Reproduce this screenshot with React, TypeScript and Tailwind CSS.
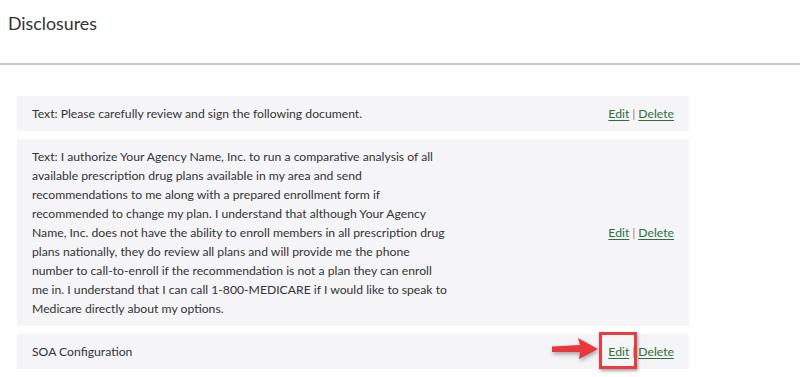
import React from 'react';

const rows = [
  { id: 1, lines: ['Text: Please carefully review and sign the following document.'] },
  {
    id: 2,
    lines: [
      'Text: I authorize Your Agency Name, Inc. to run a comparative analysis of all',
      'available prescription drug plans available in my area and send',
      'recommendations to me along with a prepared enrollment form if',
      'recommended to change my plan. I understand that although Your Agency',
      'Name, Inc. does not have the ability to enroll members in all prescription drug',
      'plans nationally, they do review all plans and will provide me the phone',
      'number to call-to-enroll if the recommendation is not a plan they can enroll',
      'me in. I understand that I can call 1-800-MEDICARE if I would like to speak to',
      'Medicare directly about my options.',
    ],
  },
  { id: 3, lines: ['SOA Configuration'], highlight: true },
];

export default function App() {
  return (
    <div className="min-h-screen bg-white text-[#333333] font-['Lato','Noto_Sans',sans-serif]">
      <header className="h-[65px] border-b-2 border-[#c9cacd] px-2 pt-[11px]">
        <h1 className="text-[17.8px] leading-[24px]">Disclosures</h1>
      </header>

      <div className="ml-[17px] mt-[31px] flex w-[672px] flex-col gap-[8px]">
        {rows.map((r) => (
          <div key={r.id} className="flex items-center justify-between bg-[#f5f5f7] px-[15px] py-[8px] text-[12.2px] leading-[19px]">
            <p className="w-[440px]">
              {r.lines.map((l, i) => (
                <span key={i} className="block whitespace-nowrap">{l}</span>
              ))}
            </p>
            <div className="relative flex items-center gap-[3px] text-[#2f6e3b]">
              <a href="#" className="underline underline-offset-2">Edit</a>
              <span className="text-[#888888]">|</span>
              <a href="#" className="underline underline-offset-2">Delete</a>
              {r.highlight && (
                <>
                  <span className="absolute left-[-9px] top-[-10px] h-[37px] w-[38px] border-[3px] border-[#ec3b40] shadow-[1px_2px_3px_rgba(0,0,0,0.35)]" />
                  <svg className="absolute left-[-58px] top-[-6px] drop-shadow-[1px_2px_2px_rgba(0,0,0,0.35)]" width="50" height="26" viewBox="0 0 50 26">
                    <path d="M2 10.5 L30 9 L28 2 L48 13 L29 23 L30 16 L2 16 Z" fill="#e8383d" strokeLinejoin="round" />
                  </svg>
                </>
              )}
            </div>
          </div>
        ))}
      </div>
    </div>
  );
}
